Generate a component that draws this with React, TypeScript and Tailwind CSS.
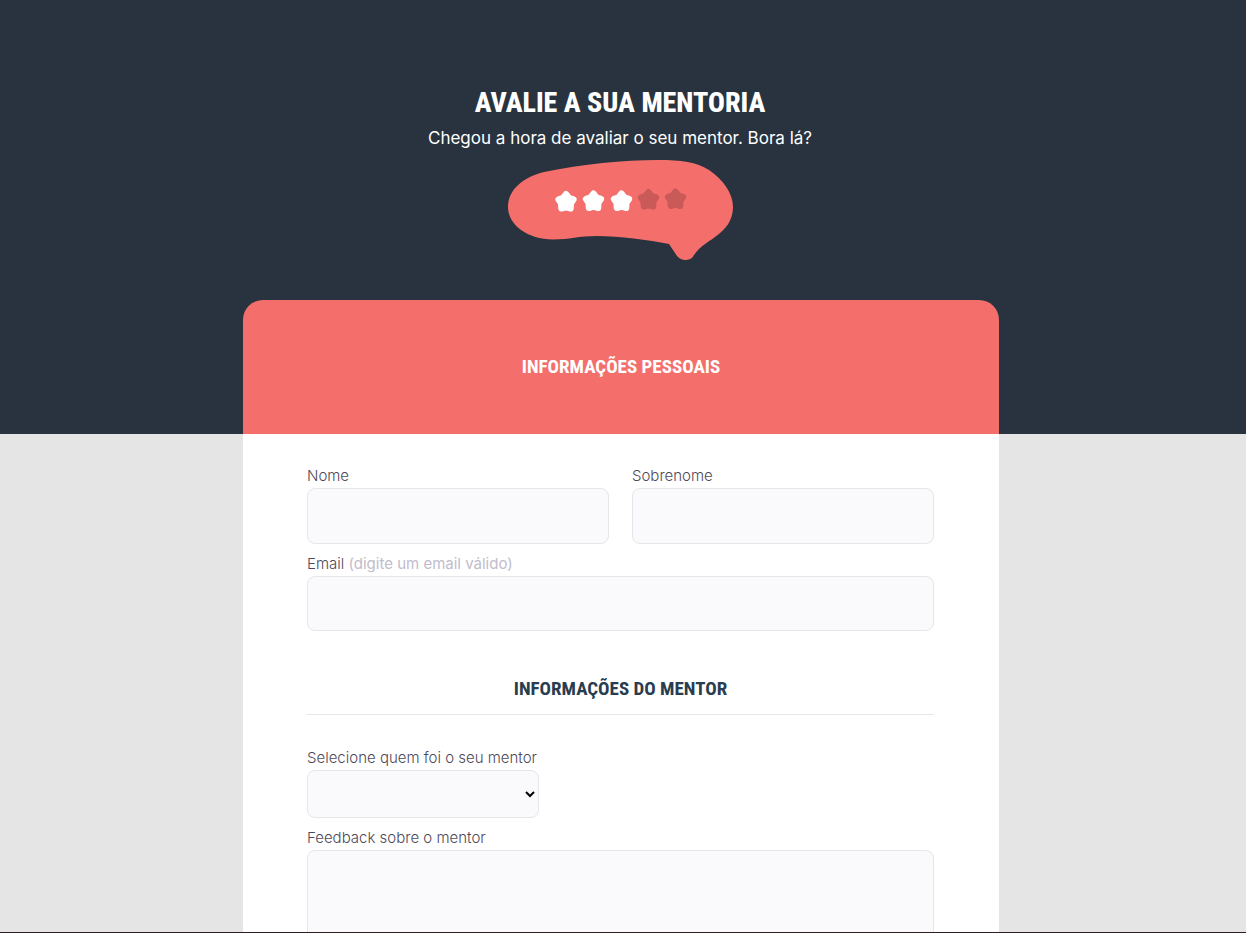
import type { ReactNode } from 'react';

const headingFont =
  "font-['Noto_Sans_ExtraCondensed','Noto_Sans_Extra_Condensed','Roboto_Condensed','Roboto',sans-serif]";

const stars = [
  { x: 58, y: 42, filled: true },
  { x: 85.5, y: 41.5, filled: true },
  { x: 113.5, y: 41.5, filled: true },
  { x: 140.5, y: 40, filled: false },
  { x: 167.5, y: 39.5, filled: false },
];

const starPoints = Array.from({ length: 10 }, (_, i) => {
  const radius = i % 2 === 0 ? 7.8 : 5;
  const angle = (Math.PI / 5) * i - Math.PI / 2;
  return `${(radius * Math.cos(angle)).toFixed(2)},${(radius * Math.sin(angle)).toFixed(2)}`;
}).join(' ');

function RatingBubble() {
  return (
    <svg viewBox="0 0 225 100" className="h-[100px] w-[225px]" role="img" aria-label="3 de 5 estrelas">
      <path
        fill="#f46f6b"
        d="M0 47C0 29 16 17 36 12C75 4 115 0 150 0C174 0 188 2 201 10C216 20 225 34 225 47C225 61 217 70 207 77C199 83 192 86 186 95C183 101.500 174 101.500 169 96L161 84C140 80 112 76 89 76C70 76 62 79.500 45 79.500C20 79.500 0 65 0 47Z"
      />
      {stars.map((star) => (
        <polygon
          key={star.x}
          points={starPoints}
          transform={`translate(${star.x} ${star.y})`}
          fill={star.filled ? '#ffffff' : '#c95a58'}
          stroke={star.filled ? '#ffffff' : '#c95a58'}
          strokeWidth="6.4"
          strokeLinejoin="round"
        />
      ))}
    </svg>
  );
}

const fieldStyle = 'block w-full rounded-lg border border-[#e6e6ea] bg-[#fafafc] px-4 text-base';

function Field({ id, label, hint, children }: { id: string; label: string; hint?: string; children: ReactNode }) {
  return (
    <div>
      <label htmlFor={id} className="block text-[15px] leading-6 font-light text-[#4e4958]">
        {label}
        {hint && <span className="font-normal text-[#c1bccc]"> {hint}</span>}
      </label>
      {children}
    </div>
  );
}

export default function App() {
  return (
    <div className="h-screen overflow-y-auto border-b border-[#2a211e] bg-[#e5e5e5] font-['Inter',sans-serif] [scrollbar-width:none]">
      <header className="flex flex-col items-center bg-[#29333f] pt-20 pr-1.5 pb-[174px] text-center text-white">
        <h1 className={`${headingFont} text-[28px] leading-[46px] font-extrabold uppercase`}>Avalie a sua mentoria</h1>
        <p className="mb-2.5 text-[17px] leading-6">Chegou a hora de avaliar o seu mentor. Bora lá?</p>
        <RatingBubble />
      </header>

      <main className="relative -mt-[134px] pr-1">
        <form className="mx-auto max-w-[756px]">
          <h2
            className={`${headingFont} rounded-t-[20px] bg-[#f46f6b] py-[51px] text-center text-[19px] leading-8 font-bold text-white uppercase`}
          >
            Informações pessoais
          </h2>

          <div className="bg-white pt-[30px] pr-[65px] pb-16 pl-16">
            <div className="grid grid-cols-2 gap-x-[23px]">
              <Field id="nome" label="Nome">
                <input id="nome" type="text" className={`${fieldStyle} h-14`} />
              </Field>
              <Field id="sobrenome" label="Sobrenome">
                <input id="sobrenome" type="text" className={`${fieldStyle} h-14`} />
              </Field>
              <div className="col-span-2 mt-2">
                <Field id="email" label="Email" hint="(digite um email válido)">
                  <input id="email" type="email" className={`${fieldStyle} h-[55px]`} />
                </Field>
              </div>
            </div>

            <h2
              className={`${headingFont} mt-[42px] mb-[31px] border-b border-[#e6e6ea] pb-[9px] text-center text-[19px] leading-8 font-bold text-[#293d4f] uppercase`}
            >
              Informações do mentor
            </h2>

            <div className="mb-2 w-[232px]">
              <Field id="mentor" label="Selecione quem foi o seu mentor">
                <select
                  id="mentor"
                  className="block h-12 w-full rounded-lg border border-[#e6e6ea] bg-[#fafafc] text-sm text-black"
                >
                  <option value=""></option>
                </select>
              </Field>
            </div>

            <Field id="feedback" label="Feedback sobre o mentor">
              <textarea id="feedback" className={`${fieldStyle} h-40 resize-none py-3`} />
            </Field>
          </div>
        </form>
      </main>
    </div>
  );
}
